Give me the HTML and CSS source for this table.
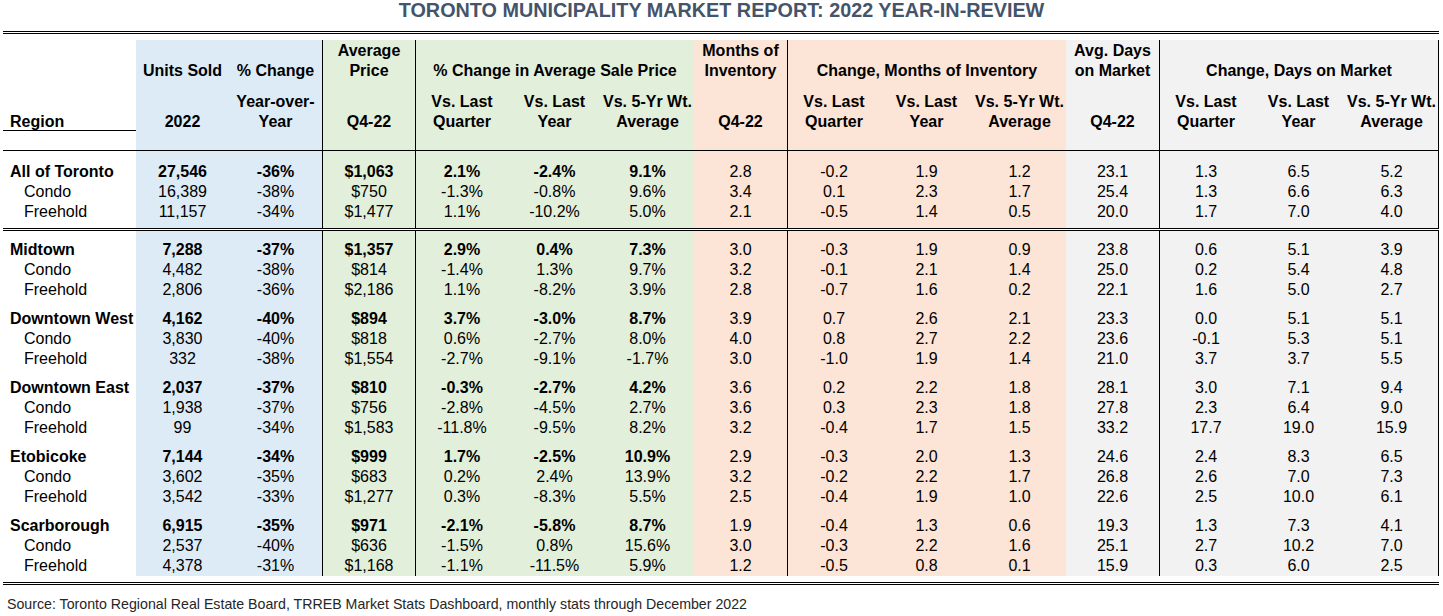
FILE: index.html
```html
<!DOCTYPE html>
<html lang="en">
<head>
<meta charset="utf-8">
<title>Toronto Municipality Market Report: 2022 Year-in-Review</title>
<link rel="stylesheet" href="styles.css">
</head>
<body>
<h1 class="title">TORONTO MUNICIPALITY MARKET REPORT: 2022 YEAR-IN-REVIEW</h1>
<div class="sheet">
  <div class="grid hrow-a">
    <div class="hc"></div>
    <div class="hc bl l2">Units Sold</div>
    <div class="hc bl l2">% Change</div>
    <div class="hc gr vl">Average<br>Price</div>
    <div class="hc gr vl s3 l2">% Change in Average Sale Price</div>
    <div class="hc or">Months of<br>Inventory</div>
    <div class="hc or vl s3 l2">Change, Months of Inventory</div>
    <div class="hc gy">Avg. Days<br>on Market</div>
    <div class="hc gy vl vr s3 l2">Change, Days on Market</div>
  </div>
  <div class="grid row hrow-b">
    <div class="l2">Region</div>
    <div class="l2">2022</div>
    <div>Year-over-<br>Year</div>
    <div class="l2">Q4-22</div>
    <div>Vs. Last<br>Quarter</div>
    <div>Vs. Last<br>Year</div>
    <div>Vs. 5-Yr Wt.<br>Average</div>
    <div class="l2">Q4-22</div>
    <div>Vs. Last<br>Quarter</div>
    <div>Vs. Last<br>Year</div>
    <div>Vs. 5-Yr Wt.<br>Average</div>
    <div class="l2">Q4-22</div>
    <div>Vs. Last<br>Quarter</div>
    <div>Vs. Last<br>Year</div>
    <div>Vs. 5-Yr Wt.<br>Average</div>
  </div>
  <div class="grid row blank">
    <div></div><div></div><div></div><div></div><div></div><div></div><div></div><div></div><div></div><div></div><div></div><div></div><div></div><div></div><div></div>
  </div>

  <div class="grid row lead first">
    <div>All of Toronto</div><div>27,546</div><div>-36%</div><div>$1,063</div><div>2.1%</div><div>-2.4%</div><div>9.1%</div><div>2.8</div><div>-0.2</div><div>1.9</div><div>1.2</div><div>23.1</div><div>1.3</div><div>6.5</div><div>5.2</div>
  </div>
  <div class="grid row sub">
    <div>Condo</div><div>16,389</div><div>-38%</div><div>$750</div><div>-1.3%</div><div>-0.8%</div><div>9.6%</div><div>3.4</div><div>0.1</div><div>2.3</div><div>1.7</div><div>25.4</div><div>1.3</div><div>6.6</div><div>6.3</div>
  </div>
  <div class="grid row sub end">
    <div>Freehold</div><div>11,157</div><div>-34%</div><div>$1,477</div><div>1.1%</div><div>-10.2%</div><div>5.0%</div><div>2.1</div><div>-0.5</div><div>1.4</div><div>0.5</div><div>20.0</div><div>1.7</div><div>7.0</div><div>4.0</div>
  </div>

  <div class="grid row lead">
    <div>Midtown</div><div>7,288</div><div>-37%</div><div>$1,357</div><div>2.9%</div><div>0.4%</div><div>7.3%</div><div>3.0</div><div>-0.3</div><div>1.9</div><div>0.9</div><div>23.8</div><div>0.6</div><div>5.1</div><div>3.9</div>
  </div>
  <div class="grid row sub">
    <div>Condo</div><div>4,482</div><div>-38%</div><div>$814</div><div>-1.4%</div><div>1.3%</div><div>9.7%</div><div>3.2</div><div>-0.1</div><div>2.1</div><div>1.4</div><div>25.0</div><div>0.2</div><div>5.4</div><div>4.8</div>
  </div>
  <div class="grid row sub">
    <div>Freehold</div><div>2,806</div><div>-36%</div><div>$2,186</div><div>1.1%</div><div>-8.2%</div><div>3.9%</div><div>2.8</div><div>-0.7</div><div>1.6</div><div>0.2</div><div>22.1</div><div>1.6</div><div>5.0</div><div>2.7</div>
  </div>

  <div class="grid row lead">
    <div>Downtown West</div><div>4,162</div><div>-40%</div><div>$894</div><div>3.7%</div><div>-3.0%</div><div>8.7%</div><div>3.9</div><div>0.7</div><div>2.6</div><div>2.1</div><div>23.3</div><div>0.0</div><div>5.1</div><div>5.1</div>
  </div>
  <div class="grid row sub">
    <div>Condo</div><div>3,830</div><div>-40%</div><div>$818</div><div>0.6%</div><div>-2.7%</div><div>8.0%</div><div>4.0</div><div>0.8</div><div>2.7</div><div>2.2</div><div>23.6</div><div>-0.1</div><div>5.3</div><div>5.1</div>
  </div>
  <div class="grid row sub">
    <div>Freehold</div><div>332</div><div>-38%</div><div>$1,554</div><div>-2.7%</div><div>-9.1%</div><div>-1.7%</div><div>3.0</div><div>-1.0</div><div>1.9</div><div>1.4</div><div>21.0</div><div>3.7</div><div>3.7</div><div>5.5</div>
  </div>

  <div class="grid row lead">
    <div>Downtown East</div><div>2,037</div><div>-37%</div><div>$810</div><div>-0.3%</div><div>-2.7%</div><div>4.2%</div><div>3.6</div><div>0.2</div><div>2.2</div><div>1.8</div><div>28.1</div><div>3.0</div><div>7.1</div><div>9.4</div>
  </div>
  <div class="grid row sub">
    <div>Condo</div><div>1,938</div><div>-37%</div><div>$756</div><div>-2.8%</div><div>-4.5%</div><div>2.7%</div><div>3.6</div><div>0.3</div><div>2.3</div><div>1.8</div><div>27.8</div><div>2.3</div><div>6.4</div><div>9.0</div>
  </div>
  <div class="grid row sub">
    <div>Freehold</div><div>99</div><div>-34%</div><div>$1,583</div><div>-11.8%</div><div>-9.5%</div><div>8.2%</div><div>3.2</div><div>-0.4</div><div>1.7</div><div>1.5</div><div>33.2</div><div>17.7</div><div>19.0</div><div>15.9</div>
  </div>

  <div class="grid row lead">
    <div>Etobicoke</div><div>7,144</div><div>-34%</div><div>$999</div><div>1.7%</div><div>-2.5%</div><div>10.9%</div><div>2.9</div><div>-0.3</div><div>2.0</div><div>1.3</div><div>24.6</div><div>2.4</div><div>8.3</div><div>6.5</div>
  </div>
  <div class="grid row sub">
    <div>Condo</div><div>3,602</div><div>-35%</div><div>$683</div><div>0.2%</div><div>2.4%</div><div>13.9%</div><div>3.2</div><div>-0.2</div><div>2.2</div><div>1.7</div><div>26.8</div><div>2.6</div><div>7.0</div><div>7.3</div>
  </div>
  <div class="grid row sub">
    <div>Freehold</div><div>3,542</div><div>-33%</div><div>$1,277</div><div>0.3%</div><div>-8.3%</div><div>5.5%</div><div>2.5</div><div>-0.4</div><div>1.9</div><div>1.0</div><div>22.6</div><div>2.5</div><div>10.0</div><div>6.1</div>
  </div>

  <div class="grid row lead">
    <div>Scarborough</div><div>6,915</div><div>-35%</div><div>$971</div><div>-2.1%</div><div>-5.8%</div><div>8.7%</div><div>1.9</div><div>-0.4</div><div>1.3</div><div>0.6</div><div>19.3</div><div>1.3</div><div>7.3</div><div>4.1</div>
  </div>
  <div class="grid row sub">
    <div>Condo</div><div>2,537</div><div>-40%</div><div>$636</div><div>-1.5%</div><div>0.8%</div><div>15.6%</div><div>3.0</div><div>-0.3</div><div>2.2</div><div>1.6</div><div>25.1</div><div>2.7</div><div>10.2</div><div>7.0</div>
  </div>
  <div class="grid row sub">
    <div>Freehold</div><div>4,378</div><div>-31%</div><div>$1,168</div><div>-1.1%</div><div>-11.5%</div><div>5.9%</div><div>1.2</div><div>-0.5</div><div>0.8</div><div>0.1</div><div>15.9</div><div>0.3</div><div>6.0</div><div>2.5</div>
  </div>
</div>
<p class="source">Source: Toronto Regional Real Estate Board, TRREB Market Stats Dashboard, monthly stats through December 2022</p>
</body>
</html>
```

FILE: styles.css
```css
* { box-sizing: border-box; }

body {
  margin: 0;
  font-family: "Liberation Sans", Arial, sans-serif;
  font-size: 16px;
  color: #000;
  background: #fff;
}

.title {
  margin: 0;
  padding-bottom: 10px;
  font-size: 19.8px;
  line-height: 21px;
  font-weight: bold;
  text-align: center;
  color: #44546A;
}

.sheet {
  margin-left: 3px;
  width: 1436px;
  border-top: 3px double #000;
  border-bottom: 3px double #000;
  padding: 6px 0;
}

.grid {
  display: grid;
  grid-template-columns: 133px repeat(13, 93px) 94px;
}

.grid > div {
  line-height: 20px;
  text-align: center;
  white-space: nowrap;
}

/* header row A */
.hrow-a { height: 52px; font-weight: bold; }
.hrow-a > .hc { padding-top: 1px; }
.hrow-a > .hc.l2 { padding-top: 21px; }
.s3 { grid-column: span 3; }
.bl { background: #DDEBF7; }
.gr { background: #E2EFDA; }
.or { background: #FCE4D6; }
.gy { background: #F2F2F2; }
.vl { border-left: 1px solid #000; }
.vr { border-right: 1px solid #000; }

/* column colours & rules for full rows */
.row > :nth-child(2),
.row > :nth-child(3) { background: #DDEBF7; }
.row > :nth-child(n+4):nth-child(-n+7) { background: #E2EFDA; }
.row > :nth-child(n+8):nth-child(-n+11) { background: #FCE4D6; }
.row > :nth-child(n+12) { background: #F2F2F2; }
.row > :nth-child(4),
.row > :nth-child(5),
.row > :nth-child(9),
.row > :nth-child(13) { border-left: 1px solid #000; }
.row > :nth-child(15) { border-right: 1px solid #000; }
.row > :first-child { text-align: left; padding-left: 7px; }

/* header row B */
.hrow-b {
  height: 39px;
  font-weight: bold;
  border-bottom: 1px solid #000;
}
.hrow-b > .l2 { padding-top: 20px; }

.blank {
  height: 20px;
  border-bottom: 1px solid #000;
}

/* data rows */
.lead > div { padding-top: 9px; }
.lead > :nth-child(-n+7) { font-weight: bold; }
.lead.first > div { padding-top: 11px; }
.sub > :first-child { padding-left: 21px; }
.end { border-bottom: 3px double #000; }
.end > div { padding-bottom: 6px; }

.source {
  margin: 9px 0 0 7px;
  font-size: 14.2px;
  line-height: 20px;
  color: #262626;
}
```
